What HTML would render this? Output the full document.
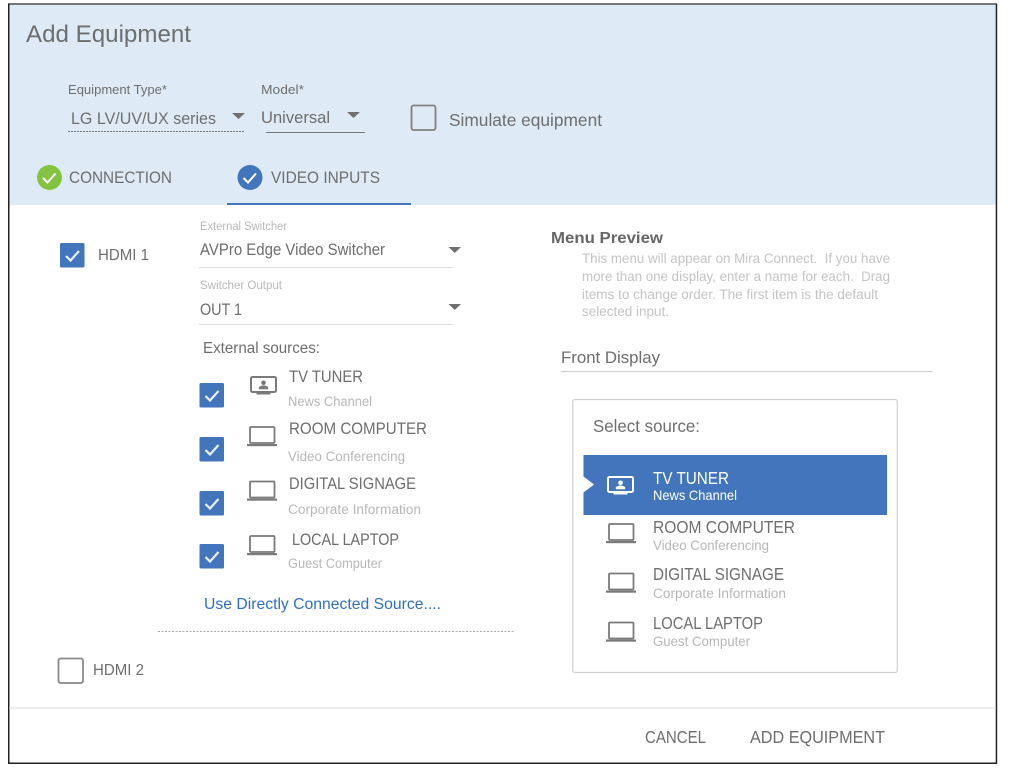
<!DOCTYPE html>
<html lang="en">
<head>
<meta charset="utf-8">
<title>Add Equipment</title>
<style>
html,body{margin:0;padding:0;background:#fff;width:1013px;height:775px;overflow:hidden}
svg{display:block;filter:blur(.3px)}
text{font-family:"Liberation Sans",sans-serif;fill:#6e6e6e;white-space:pre}
.s{fill:#b8b8b8}
.w{fill:#fff}
.b{fill:#2f6fc1}
.p{fill:#c4c4c4}
</style>
</head>
<body>
<svg width="1013" height="775" viewBox="0 0 1013 775" xmlns="http://www.w3.org/2000/svg">
<defs>
<g id="lap">
<rect x="3" y="1" width="24.500" height="16" rx="1" fill="none" stroke="currentColor" stroke-width="1.800"/>
<rect x="0" y="18" width="30" height="2.200" fill="currentColor"/>
</g>
<g id="tv">
<rect x="1" y="1" width="25" height="15" rx="1.500" fill="none" stroke="currentColor" stroke-width="2"/>
<circle cx="13.500" cy="6.800" r="2.300" fill="currentColor"/>
<path d="M8.800 13.300v-2.300l3.200-1.500h3l3.200 1.500v2.300z" fill="currentColor"/>
<rect x="6.500" y="16.500" width="14" height="2" fill="currentColor"/>
</g>
<g id="cb">
<rect x="0" y="0" width="24.500" height="24.500" rx="1.500" fill="#4275bb"/>
<path d="M6 13l4.500 4.500L19 8" fill="none" stroke="#e8f0fa" stroke-width="2.200"/>
</g>
</defs>

<rect x="9" y="5" width="987" height="200" fill="#deebf7"/>
<rect x="8" y="3" width="989" height="2" fill="#777"/>
<rect x="8" y="4" width="1.500" height="760" fill="#222"/>
<rect x="995.700" y="4" width="1.500" height="760" fill="#222"/>
<rect x="8" y="762.500" width="989" height="1.500" fill="#222"/>

<text x="26" y="42" font-size="24.500" textLength="165" lengthAdjust="spacingAndGlyphs">Add Equipment</text>
<text x="68" y="94" font-size="13" textLength="99" lengthAdjust="spacingAndGlyphs">Equipment Type*</text>
<text x="261" y="94" font-size="13" textLength="43" lengthAdjust="spacingAndGlyphs">Model*</text>
<text x="71" y="124" font-size="16.500" textLength="145" lengthAdjust="spacingAndGlyphs">LG LV/UV/UX series</text>
<text x="261" y="123" font-size="16.500" textLength="69" lengthAdjust="spacingAndGlyphs">Universal</text>
<path d="M232 113h13l-6.500 6z" fill="#707070"/>
<path d="M347 112h13l-6.500 6z" fill="#707070"/>
<line x1="68" y1="131.500" x2="245" y2="131.500" stroke="#777" stroke-width="1" stroke-dasharray="2 1"/>
<rect x="266" y="132" width="99" height="1" fill="#777"/>
<rect x="411.500" y="105.500" width="24" height="24.500" rx="2" fill="none" stroke="#808080" stroke-width="1.800"/>
<text x="449" y="126" font-size="17.500" textLength="153" lengthAdjust="spacingAndGlyphs">Simulate equipment</text>

<ellipse cx="49.500" cy="177.500" rx="12.500" ry="12.500" fill="#84c341"/>
<path d="M43 178l4.500 4.500 8-9" fill="none" stroke="#fff" stroke-width="2"/>
<text x="69" y="183" font-size="17" textLength="103" lengthAdjust="spacingAndGlyphs">CONNECTION</text>
<ellipse cx="250" cy="177.500" rx="12.500" ry="12.500" fill="#4275bb"/>
<path d="M243.500 178l4.500 4.500 8-9" fill="none" stroke="#fff" stroke-width="2"/>
<text x="271" y="183" font-size="17" textLength="109" lengthAdjust="spacingAndGlyphs">VIDEO INPUTS</text>
<rect x="227" y="203" width="184" height="2" fill="#4275bb"/>

<use href="#cb" x="60" y="243"/>
<text x="98" y="260" font-size="15.500" textLength="51" lengthAdjust="spacingAndGlyphs">HDMI 1</text>

<text class="s" x="200" y="230" font-size="11.500" textLength="87" lengthAdjust="spacingAndGlyphs">External Switcher</text>
<text x="200" y="255" font-size="16.500" textLength="185" lengthAdjust="spacingAndGlyphs">AVPro Edge Video Switcher</text>
<path d="M448.500 247h12.500l-6.200 6z" fill="#707070"/>
<rect x="199" y="267" width="254" height="1" fill="#ddd"/>
<text class="s" x="200" y="289" font-size="11.500" textLength="82" lengthAdjust="spacingAndGlyphs">Switcher Output</text>
<text x="200" y="315" font-size="16.500" textLength="42" lengthAdjust="spacingAndGlyphs">OUT 1</text>
<path d="M448.500 304h12.500l-6.200 6z" fill="#707070"/>
<rect x="199" y="324" width="254" height="1" fill="#ddd"/>
<text x="203" y="353" font-size="15.500" textLength="117" lengthAdjust="spacingAndGlyphs">External sources:</text>

<use href="#cb" x="199.500" y="383"/>
<use href="#tv" x="250" y="376" color="#7a7a7a"/>
<text x="289" y="382" font-size="16.500" textLength="74" lengthAdjust="spacingAndGlyphs">TV TUNER</text>
<text class="s" x="288" y="406" font-size="13.500" textLength="84" lengthAdjust="spacingAndGlyphs">News Channel</text>

<use href="#cb" x="199.500" y="437"/>
<use href="#lap" x="247" y="426" color="#7a7a7a"/>
<text x="289" y="434" font-size="16.500" textLength="138" lengthAdjust="spacingAndGlyphs">ROOM COMPUTER</text>
<text class="s" x="288" y="461" font-size="13.500" textLength="117" lengthAdjust="spacingAndGlyphs">Video Conferencing</text>

<use href="#cb" x="199.500" y="491"/>
<use href="#lap" x="247" y="480.500" color="#7a7a7a"/>
<text x="289" y="489" font-size="16.500" textLength="127" lengthAdjust="spacingAndGlyphs">DIGITAL SIGNAGE</text>
<text class="s" x="288" y="514" font-size="13.500" textLength="133" lengthAdjust="spacingAndGlyphs">Corporate Information</text>

<use href="#cb" x="199.500" y="544"/>
<use href="#lap" x="247" y="535" color="#7a7a7a"/>
<text x="292" y="545" font-size="16.500" textLength="107" lengthAdjust="spacingAndGlyphs">LOCAL LAPTOP</text>
<text class="s" x="288" y="568" font-size="13.500" textLength="94" lengthAdjust="spacingAndGlyphs">Guest Computer</text>

<text class="b" x="204" y="609" font-size="16" textLength="237" lengthAdjust="spacingAndGlyphs">Use Directly Connected Source....</text>
<line x1="158" y1="631.500" x2="514" y2="631.500" stroke="#aaa" stroke-width="1" stroke-dasharray="2 1.500"/>

<rect x="58.500" y="658.500" width="24.500" height="24.500" rx="2" fill="#fff" stroke="#8a8a8a" stroke-width="1.800"/>
<text x="93" y="675" font-size="15.500" textLength="51" lengthAdjust="spacingAndGlyphs">HDMI 2</text>

<text x="551" y="243" font-size="16" font-weight="700" textLength="112" lengthAdjust="spacingAndGlyphs" style="fill:#666">Menu Preview</text>
<text class="p" x="582" y="263" font-size="13.500" textLength="308" lengthAdjust="spacingAndGlyphs">This menu will appear on Mira Connect.  If you have</text>
<text class="p" x="582" y="281" font-size="13.500" textLength="308" lengthAdjust="spacingAndGlyphs">more than one display, enter a name for each.  Drag</text>
<text class="p" x="582" y="299" font-size="13.500" textLength="296" lengthAdjust="spacingAndGlyphs">items to change order. The first item is the default</text>
<text class="p" x="582" y="316" font-size="13.500" textLength="87" lengthAdjust="spacingAndGlyphs">selected input.</text>

<text x="561" y="363" font-size="16.500" textLength="99" lengthAdjust="spacingAndGlyphs">Front Display</text>
<rect x="561" y="371" width="371.500" height="1" fill="#ccc"/>

<rect x="572.800" y="399.500" width="324.500" height="273" rx="2" fill="#fff" stroke="#d2d2d2" stroke-width="1.200"/>
<text x="593" y="432" font-size="17.500" textLength="107" lengthAdjust="spacingAndGlyphs">Select source:</text>

<rect x="583.500" y="455" width="303.500" height="60" fill="#4275bb"/>
<path d="M583.500 476.500l10.500 8-10.500 8z" fill="#fff"/>
<use href="#tv" x="607" y="476" color="#fff"/>
<text class="w" x="653" y="484" font-size="17.500" textLength="76" lengthAdjust="spacingAndGlyphs">TV TUNER</text>
<text class="w" x="653" y="500" font-size="14" textLength="84" lengthAdjust="spacingAndGlyphs">News Channel</text>

<use href="#lap" x="606" y="523" color="#7a7a7a"/>
<text x="653" y="533" font-size="17.500" textLength="142" lengthAdjust="spacingAndGlyphs">ROOM COMPUTER</text>
<text class="s" x="653" y="550" font-size="14" textLength="116" lengthAdjust="spacingAndGlyphs">Video Conferencing</text>

<use href="#lap" x="606" y="572.500" color="#7a7a7a"/>
<text x="653" y="580" font-size="17.500" textLength="131" lengthAdjust="spacingAndGlyphs">DIGITAL SIGNAGE</text>
<text class="s" x="653" y="598" font-size="14" textLength="133" lengthAdjust="spacingAndGlyphs">Corporate Information</text>

<use href="#lap" x="606" y="621.500" color="#7a7a7a"/>
<text x="653" y="629" font-size="17.500" textLength="110" lengthAdjust="spacingAndGlyphs">LOCAL LAPTOP</text>
<text class="s" x="653" y="646" font-size="14" textLength="97" lengthAdjust="spacingAndGlyphs">Guest Computer</text>

<rect x="9" y="707.500" width="987" height="1" fill="#d8d8d8"/>
<text x="645" y="743" font-size="17.500" textLength="61" lengthAdjust="spacingAndGlyphs">CANCEL</text>
<text x="750" y="743" font-size="17.500" textLength="135" lengthAdjust="spacingAndGlyphs">ADD EQUIPMENT</text>
</svg>
</body>
</html>
